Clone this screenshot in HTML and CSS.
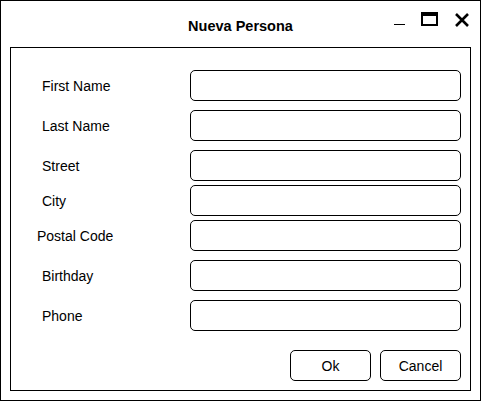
FILE: index.html
```html
<!DOCTYPE html>
<html>
<head>
<meta charset="utf-8">
<link rel="stylesheet" href="styles.css">
</head>
<body>
<div class="window">
  <div class="titlebar">
    <div class="spacer"></div>
    <div class="title">Nueva Persona</div>
    <div class="controls">
      <svg class="ctl-icons" width="80" height="24" viewBox="0 0 80 24">
        <rect x="3" y="16" width="11" height="1" fill="#000"/>
        <rect x="31" y="5" width="15" height="12" fill="none" stroke="#000" stroke-width="2"/>
        <rect x="30" y="4" width="17" height="4" fill="#000"/>
        <path d="M65 6 L77 18 M77 6 L65 18" stroke="#000" stroke-width="2.6" fill="none"/>
      </svg>
    </div>
  </div>
  <div class="panel">
    <div class="form">
      <div class="row"><label class="lbl">First Name</label><input class="field" type="text"></div>
      <div class="row gap-lg"><label class="lbl">Last Name</label><input class="field" type="text"></div>
      <div class="row gap-lg"><label class="lbl">Street</label><input class="field" type="text"></div>
      <div class="row gap-sm"><label class="lbl">City</label><input class="field" type="text"></div>
      <div class="row gap-sm"><label class="lbl lbl-wide">Postal Code</label><input class="field" type="text"></div>
      <div class="row gap-lg"><label class="lbl">Birthday</label><input class="field" type="text"></div>
      <div class="row gap-lg"><label class="lbl">Phone</label><input class="field" type="text"></div>
    </div>
    <div class="buttons">
      <button class="btn">Ok</button>
      <button class="btn">Cancel</button>
    </div>
  </div>
</div>
</body>
</html>
```
FILE: styles.css
```css
* { box-sizing: border-box; }
html, body { margin: 0; padding: 0; background: #fff; }
body { font-family: "Liberation Sans", Arial, sans-serif; font-size: 14px; color: #000; }
.window {
  width: 481px;
  height: 401px;
  border: 1px solid #000;
  background: #fff;
}
.titlebar {
  height: 46px;
  display: grid;
  grid-template-columns: 1fr auto 1fr;
}
.title {
  font-family: "Liberation Sans", Arial, sans-serif;
  font-weight: bold;
  font-size: 14.5px;
  align-self: center;
  padding-top: 3px;
}
.controls {
  display: flex;
  justify-content: flex-end;
  align-items: flex-start;
  padding-top: 7px;
  padding-right: 9px;
}
.ctl-icons { display: block; }
.panel {
  margin: 0 9px;
  height: 344px;
  border: 1px solid #000;
  padding: 22px 9px 9px 0;
  display: flex;
  flex-direction: column;
}
.form { display: flex; flex-direction: column; }
.row {
  display: grid;
  grid-template-columns: 179px 271px;
  align-items: center;
  height: 31px;
}
.gap-lg { margin-top: 9px; }
.gap-sm { margin-top: 4px; }
.lbl { padding-left: 31px; line-height: 16px; padding-top: 1px; }
.lbl-wide { padding-left: 26px; }
.field {
  width: 271px;
  height: 31px;
  border: 1px solid #000;
  border-radius: 5px;
  background: #fff;
  margin: 0;
  padding: 0 6px;
  font: inherit;
  outline: none;
}
.buttons {
  margin-top: 19px;
  display: flex;
  justify-content: flex-end;
  gap: 9px;
}
.btn {
  width: 81px;
  height: 31px;
  border: 1px solid #000;
  border-radius: 5px;
  background: #fff;
  font: inherit;
  color: #000;
  margin: 0;
  padding: 0;
}
```
